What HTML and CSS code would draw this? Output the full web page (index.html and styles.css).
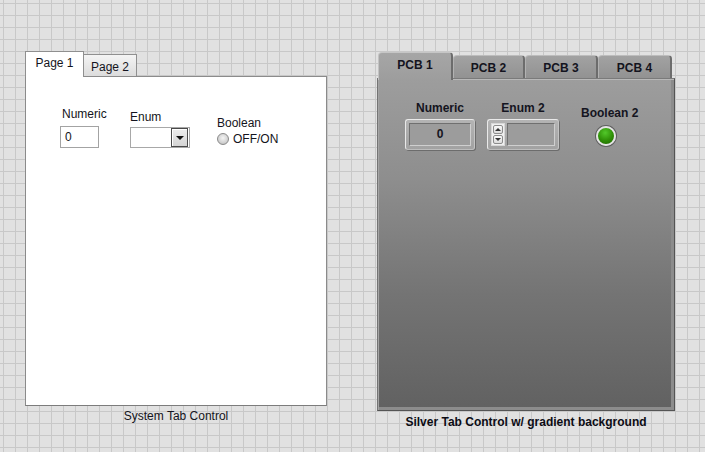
FILE: index.html
```html
<!DOCTYPE html>
<html>
  <head>
    <title>Tab Controls</title>
    <link rel="stylesheet" href="styles.css">
  </head>
  <body>
    <div class="front-panel">

      <!-- system tab control -->
      <div class="sys-control">
        <div class="sys-tabs">
          <div class="sys-tab active">Page 1</div>
          <div class="sys-tab page-2">Page 2</div>
        </div>
        <div class="sys-page">
          <div class="sys-item sys-numeric">
            <div class="sys-label numeric-label">Numeric</div>
            <div class="sys-num-box">0</div>
          </div>
          <div class="sys-item sys-enum">
            <div class="sys-label">Enum</div>
            <div class="sys-enum-box">
              <div class="sys-drop"><span class="drop-arrow"></span></div>
            </div>
          </div>
          <div class="sys-item sys-bool">
            <div class="sys-label">Boolean</div>
            <div class="sys-radio-row">
              <span class="sys-radio"></span>
              <span class="sys-radio-text">OFF/ON</span>
            </div>
          </div>
        </div>
        <div class="sys-caption">System Tab Control</div>
      </div>

      <!-- silver tab control -->
      <div class="silver-control">
        <div class="silver-tabs">
          <div class="silver-tab active">PCB 1</div>
          <div class="silver-tab tab-2">PCB 2</div>
          <div class="silver-tab tab-3">PCB 3</div>
          <div class="silver-tab tab-4">PCB 4</div>
        </div>
        <div class="silver-page">
          <div class="silver-item s-numeric">
            <div class="silver-label">Numeric</div>
            <div class="s-frame s-num">
              <div class="s-display">0</div>
            </div>
          </div>
          <div class="silver-item s-enum">
            <div class="silver-label">Enum 2</div>
            <div class="s-frame s-enum-box">
              <div class="s-spin">
                <span class="spin-btn"><span class="spin-up"></span></span>
                <span class="spin-btn"><span class="spin-down"></span></span>
              </div>
              <div class="s-display"></div>
            </div>
          </div>
          <div class="silver-item s-bool">
            <div class="silver-label">Boolean 2</div>
            <div class="led"></div>
          </div>
        </div>
        <div class="silver-caption">Silver Tab Control w/ gradient background</div>
      </div>

    </div>
  </body>
</html>
```

FILE: styles.css
```css
body {
  margin: 0;
  background-color: #e1e1e1;
  background-image:
    linear-gradient(to right, #c8c8c8 1px, transparent 1px),
    linear-gradient(to bottom, #c8c8c8 1px, transparent 1px);
  background-size: 12px 12px;
  background-position: 3px 3px;
  font-family: "Liberation Sans", Arial, sans-serif;
  font-size: 12px;
  color: #141420;
  height: 452px;
  overflow: hidden;
}

.front-panel {
  display: flex;
  align-items: flex-start;
  padding-top: 51px;
  padding-left: 25px;
}

/* ---------- system tab control ---------- */

.sys-control {
  width: 302px;
}

.sys-tabs {
  display: flex;
  align-items: flex-end;
  height: 25px;
}

.sys-tab {
  box-sizing: border-box;
  border: 1px solid #8f8f8f;
  border-bottom: none;
  text-align: center;
  line-height: 14px;
}

.sys-tab.active {
  width: 59px;
  height: 26px;
  margin-bottom: -1px;
  padding-top: 4px;
  background: white;
  position: relative;
  z-index: 1;
}

.sys-tab.page-2 {
  width: 54px;
  height: 22px;
  margin-left: -1px;
  padding-top: 5px;
  background: linear-gradient(to bottom, #f4f4f4, #dcdcdc);
}

.sys-page {
  box-sizing: border-box;
  height: 330px;
  border: 1px solid #8b8b8b;
  border-bottom-color: #7c7c7c;
  background: white;
  display: flex;
  align-items: flex-start;
  padding-left: 34px;
}

.sys-label {
  line-height: 14px;
  white-space: nowrap;
}

.numeric-label {
  padding-left: 2px;
}

.sys-numeric {
  width: 39px;
  margin-top: 30px;
}

.sys-num-box {
  box-sizing: border-box;
  width: 39px;
  height: 22px;
  margin-top: 5px;
  border: 1px solid #a3a3a3;
  padding-left: 4px;
  line-height: 20px;
}

.sys-enum {
  width: 60px;
  margin-top: 33px;
  margin-left: 31px;
}

.sys-enum-box {
  box-sizing: border-box;
  width: 60px;
  height: 21px;
  margin-top: 3px;
  border: 1px solid #a8a8a8;
  display: flex;
  justify-content: flex-end;
  padding: 0 1px;
}

.sys-drop {
  box-sizing: border-box;
  width: 17px;
  height: 19px;
  border: 1px solid #4a4a4a;
  box-shadow: inset 1px 1px 0 #fff;
  background: linear-gradient(to bottom, #ececec, #d4d4d4);
  display: flex;
  align-items: center;
  justify-content: center;
}

.drop-arrow {
  width: 0;
  height: 0;
  border-left: 4px solid transparent;
  border-right: 4px solid transparent;
  border-top: 4px solid #111;
  margin-top: 1px;
}

.sys-bool {
  margin-top: 39px;
  margin-left: 27px;
}

.sys-radio-row {
  display: flex;
  align-items: center;
  margin-top: 2px;
}

.sys-radio {
  box-sizing: border-box;
  width: 12px;
  height: 12px;
  border-radius: 50%;
  border: 1px solid #8a8a8a;
  background: radial-gradient(circle at 50% 40%, #f4f4f4, #d2d2d2 60%, #b4b4b4);
  margin-right: 4px;
}

.sys-radio-text {
  line-height: 14px;
}

.sys-caption {
  text-align: center;
  line-height: 14px;
  margin-top: 3px;
}

/* ---------- silver tab control ---------- */

.silver-control {
  width: 298px;
  margin-left: 50px;
  margin-top: 1px;
  font-weight: bold;
}

.silver-tabs {
  display: flex;
  align-items: flex-end;
  height: 26px;
  padding-left: 1px;
}

.silver-tab {
  box-sizing: border-box;
  height: 23px;
  text-align: center;
  line-height: 14px;
  padding-top: 5px;
  border-top: 1px solid #bdbdbd;
  border-left: 1px solid #b2b2b2;
  border-right: 2px solid #6c6c6c;
  border-radius: 4px 4px 0 0;
  background: linear-gradient(to bottom, #a2a2a2, #929292);
}

.silver-tab.active {
  width: 75px;
  height: 28px;
  margin-bottom: -2px;
  background: linear-gradient(to bottom, #a6a6a6, #9d9d9d);
  border-top-color: #c6c6c6;
  border-left-color: #c2c2c2;
  position: relative;
  z-index: 1;
}

.silver-tab.tab-2 {
  width: 72px;
}

.silver-tab.tab-3 {
  width: 73px;
}

.silver-tab.tab-4 {
  width: 74px;
}

.silver-page {
  box-sizing: border-box;
  height: 333px;
  border: 1px solid #545454;
  border-top-color: #7a7a7a;
  border-left-color: #747474;
  box-shadow:
    inset 0 1px 0 #b8b8b8,
    inset 1px 0 0 #a4a4a4,
    inset -3px -3px 0 #8c8c8c;
  background: linear-gradient(to bottom, #9d9d9d, #8e8e8e 30%, #747474 65%, #616161);
  display: flex;
  align-items: flex-start;
  padding-left: 27px;
  padding-top: 22px;
}

.silver-item {
  display: flex;
  flex-direction: column;
  align-items: center;
}

.silver-label {
  line-height: 14px;
  white-space: nowrap;
}

.s-frame {
  box-sizing: border-box;
  height: 31px;
  margin-top: 4px;
  border: 1px solid #e9e9e9;
  border-right-color: #c4c4c4;
  border-bottom-color: #bdbdbd;
  border-radius: 3px;
  box-shadow: 1px 1px 0 #6c6c6c;
  background: linear-gradient(to bottom, #b4b4b4, #a2a2a2);
  padding: 3px;
  display: flex;
}

.s-num {
  width: 70px;
}

.s-display {
  flex: 1;
  box-sizing: border-box;
  border: 1px solid;
  border-color: #707070 #cfcfcf #cfcfcf #707070;
  background: #9c9c9c;
  text-align: center;
  line-height: 21px;
}

.s-enum {
  margin-left: 12px;
}

.s-enum-box {
  width: 72px;
  padding-left: 3px;
}

.s-spin {
  width: 14px;
  display: flex;
  flex-direction: column;
  gap: 1px;
  margin-right: 2px;
  background: #f0f0f0;
  padding: 1px;
  box-sizing: border-box;
  border: 1px solid #d8d8d8;
}

.spin-btn {
  flex: 1;
  box-sizing: border-box;
  border: 1px solid #8c8c8c;
  border-radius: 2px;
  background: linear-gradient(to bottom, #fafafa, #dcdcdc);
  display: flex;
  align-items: center;
  justify-content: center;
}

.spin-up {
  width: 0;
  height: 0;
  border-left: 3px solid transparent;
  border-right: 3px solid transparent;
  border-bottom: 3px solid #333;
}

.spin-down {
  width: 0;
  height: 0;
  border-left: 3px solid transparent;
  border-right: 3px solid transparent;
  border-top: 3px solid #333;
}

.s-bool {
  margin-left: 22px;
  margin-top: 5px;
  align-items: flex-start;
}

.led {
  box-sizing: border-box;
  width: 20px;
  height: 20px;
  margin-top: 6px;
  margin-left: 15px;
  border-radius: 50%;
  border: 2px solid #e4e4e4;
  box-shadow: 0 0 0 1px #5e5e5e;
  background: radial-gradient(circle at 45% 30%, #52c82a, #2e8e06 55%, #1f6200);
}

.silver-caption {
  text-align: center;
  line-height: 14px;
  margin-top: 4px;
  white-space: nowrap;
  color: #0c0c14;
}
```
